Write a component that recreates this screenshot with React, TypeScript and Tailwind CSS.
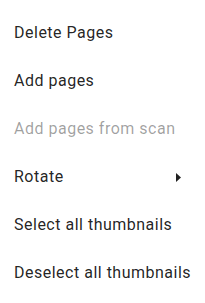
import React from "react";

const items = [
  { label: "Delete Pages" },
  { label: "Add pages" },
  { label: "Add pages from scan", disabled: true },
  { label: "Rotate", submenu: true },
  { label: "Select all thumbnails" },
  { label: "Deselect all thumbnails" },
];

export default function App() {
  return (
    <div className="w-[205px] h-[303px] bg-white pt-[9px] pb-2 font-['Roboto',sans-serif]">
      {items.map((item) => (
        <div
          key={item.label}
          className={
            "h-12 flex items-center justify-between pl-[14px] pr-6 text-base tracking-[0.5px] whitespace-nowrap " +
            (item.disabled ? "text-black/[0.38]" : "text-black/[0.87]")
          }
        >
          <span>{item.label}</span>
          {item.submenu && (
            <svg width="5" height="9" viewBox="0 0 5 9" className="fill-black/[0.87]">
              <path d="M0 0 L5 4.5 L0 9 Z" />
            </svg>
          )}
        </div>
      ))}
    </div>
  );
}
